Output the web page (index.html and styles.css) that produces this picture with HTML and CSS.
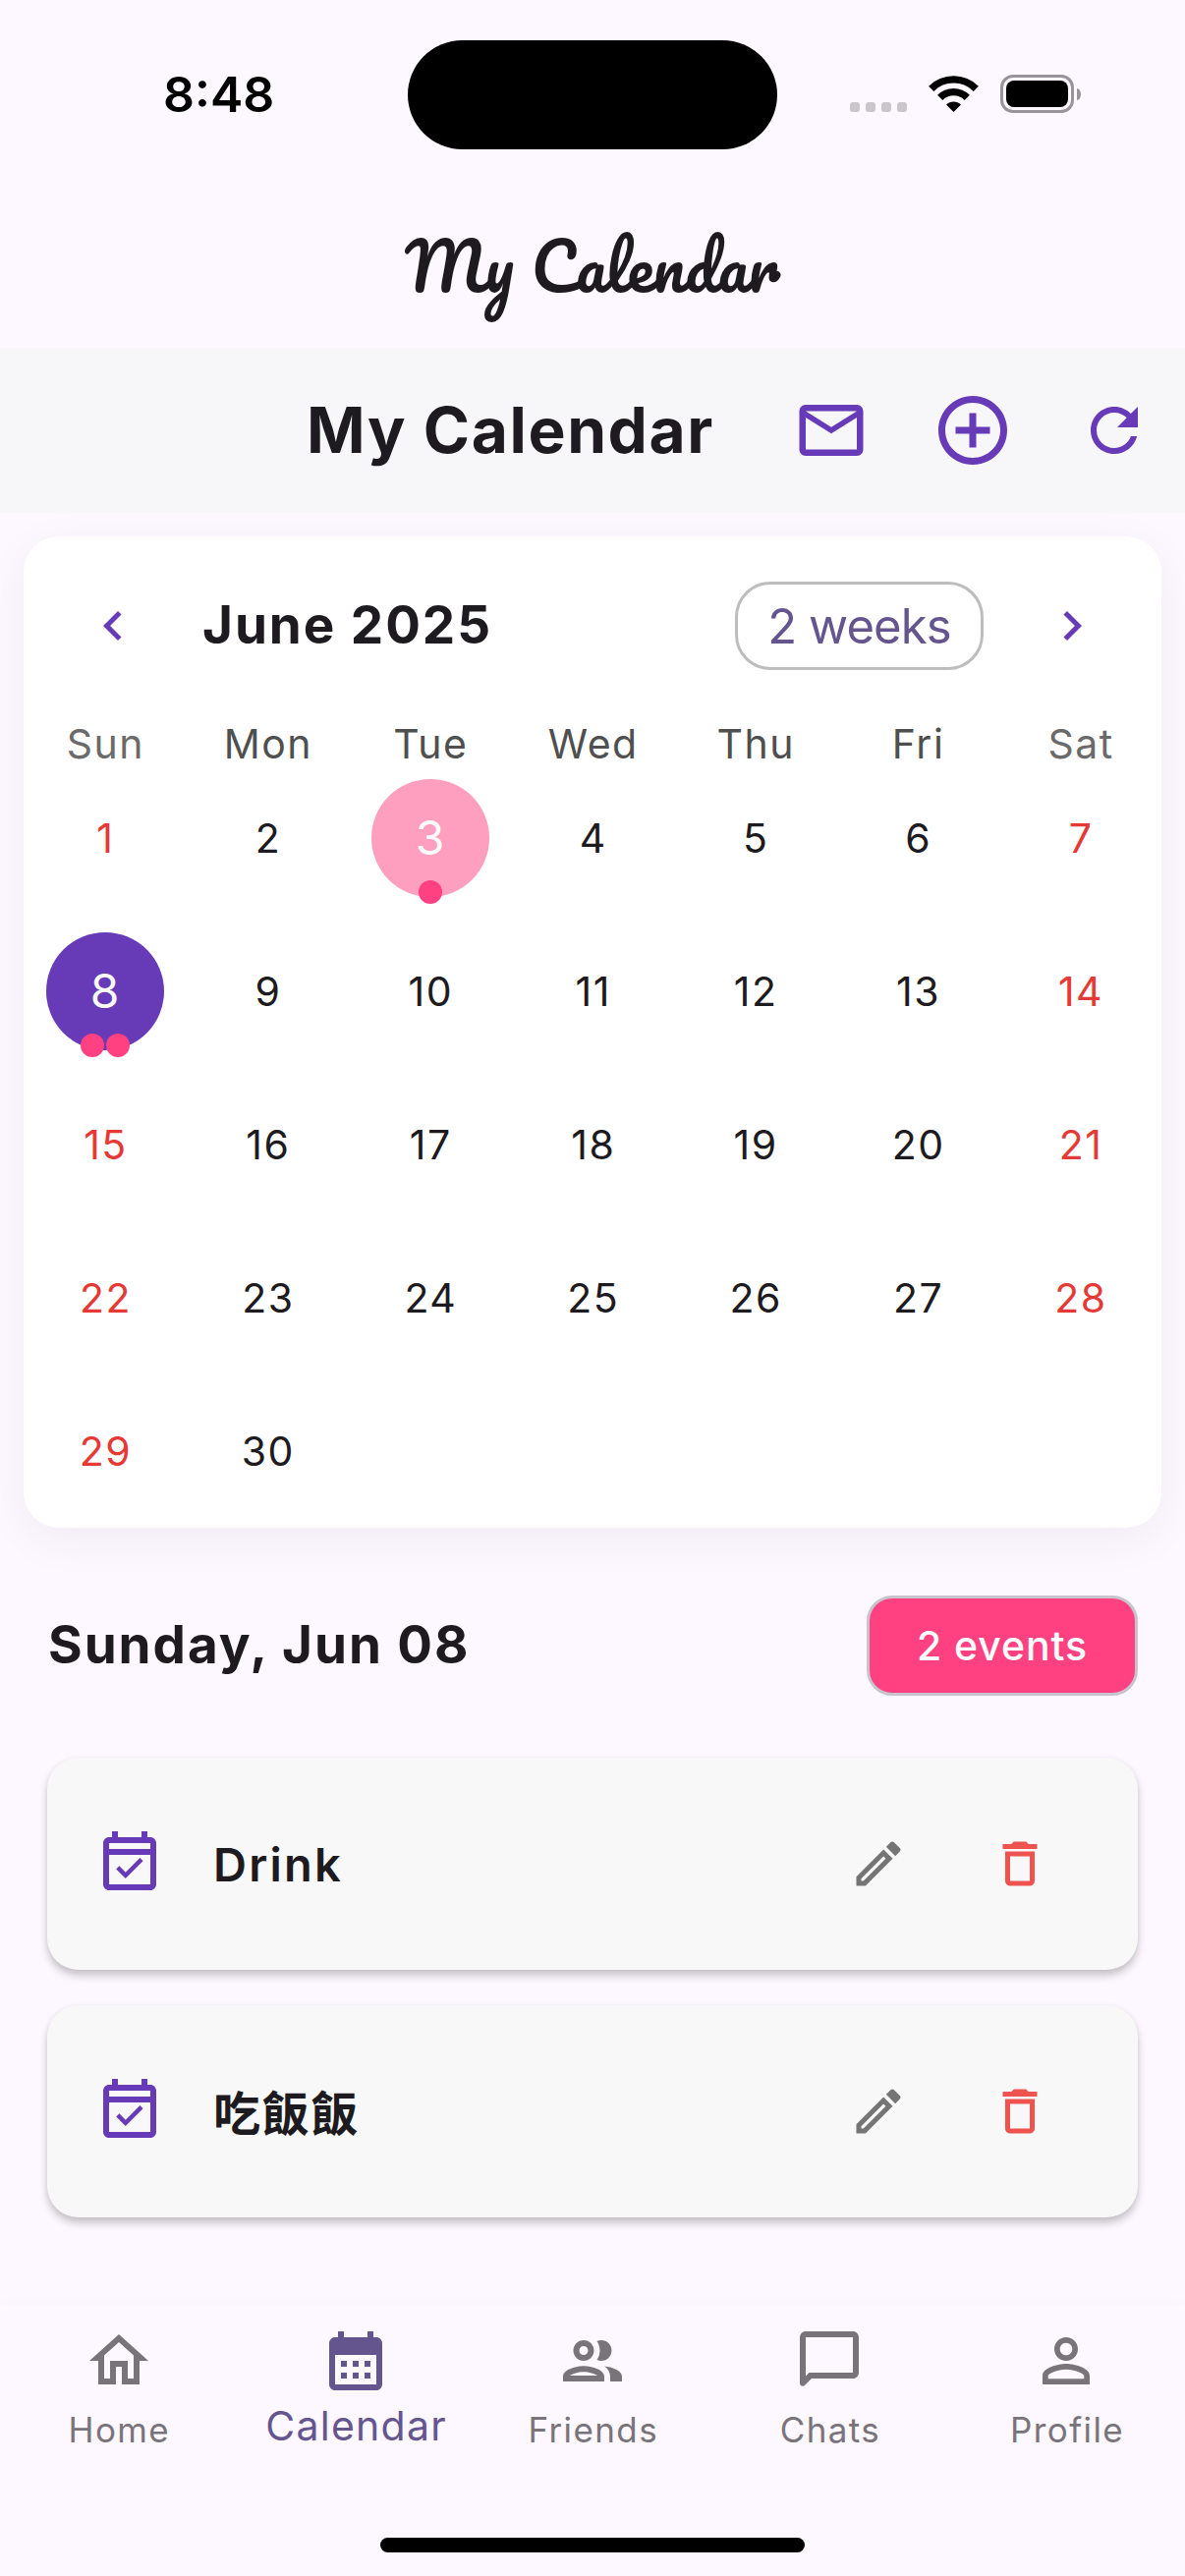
FILE: index.html
```html
<!DOCTYPE html>
<html lang="en">
<head>
<meta charset="utf-8">
<title>My Calendar</title>
<link rel="stylesheet" href="styles.css">
</head>
<body>
<div class="app">
  <header class="status">
    <div class="status-left"><span class="time">8:48</span></div>
    <div class="island"></div>
    <div class="status-right">
      <span class="signal"><i></i><i></i><i></i><i></i></span>
      <svg class="wifi" viewBox="0 0 51 37"><g fill="none" stroke="#000" stroke-width="7.4"><path d="M2.7 13.3A32.3 32.3 0 0 1 48.3 13.3"/><path d="M11.7 22.3A19.5 19.5 0 0 1 39.3 22.3"/></g><path d="M18 29.5A10.6 10.6 0 0 1 33 29.5L25.5 37z"/></svg>
      <span class="battery"><span class="battery-shell"><span class="battery-level"></span></span><span class="battery-cap"></span></span>
    </div>
  </header>

  <div class="brand"><h1>My Calendar</h1></div>

  <div class="toolbar">
    <h2>My Calendar</h2>
    <div class="tools">
      <span class="tool"><svg class="s78" viewBox="0 0 24 24"><path d="M22 6c0-1.1-.9-2-2-2H4c-1.1 0-2 .9-2 2v12c0 1.1.9 2 2 2h16c1.100 0 2-.9 2-2V6zm-2 0l-8 5-8-5h16zm0 12H4V8l8 5 8-5v10z"/></svg></span>
      <span class="tool"><svg class="s84" viewBox="0 0 24 24"><path d="M13 7h-2v4H7v2h4v4h2v-4h4v-2h-4V7zm-1-5C6.480 2 2 6.480 2 12s4.480 10 10 10 10-4.480 10-10S17.520 2 12 2zm0 18c-4.410 0-8-3.590-8-8s3.590-8 8-8 8 3.590 8 8-3.590 8-8 8z"/></svg></span>
      <span class="tool"><svg class="s72" viewBox="0 0 24 24"><path d="M17.650 6.350C16.200 4.900 14.210 4 12 4c-4.420 0-7.990 3.580-7.990 8s3.570 8 7.990 8c3.730 0 6.840-2.550 7.730-6h-2.080c-.82 2.330-3.040 4-5.650 4-3.310 0-6-2.690-6-6s2.690-6 6-6c1.660 0 3.140.69 4.220 1.780L13 11h7V4l-2.350 2.350z"/></svg></span>
    </div>
  </div>

  <section class="calendar">
    <div class="cal-head">
      <svg class="s60" viewBox="0 0 24 24"><path d="M15.410 7.410L14 6l-6 6 6 6 1.410-1.410L10.830 12z"/></svg>
      <span class="month">June 2025</span>
      <span class="format">2 weeks</span>
      <svg class="s60" viewBox="0 0 24 24"><path d="M10 6L8.590 7.410 13.170 12l-4.580 4.590L10 18l6-6z"/></svg>
    </div>
    <div class="week dow"><span class="off">Sun</span><span>Mon</span><span>Tue</span><span>Wed</span><span>Thu</span><span>Fri</span><span class="off">Sat</span></div>
    <div class="week"><span class="red">1</span><span>2</span><span><b class="pick today">3<em><i></i></em></b></span><span>4</span><span>5</span><span>6</span><span class="red">7</span></div>
    <div class="week"><span><b class="pick selected">8<em><i></i><i></i></em></b></span><span>9</span><span>10</span><span>11</span><span>12</span><span>13</span><span class="red">14</span></div>
    <div class="week"><span class="red">15</span><span>16</span><span>17</span><span>18</span><span>19</span><span>20</span><span class="red">21</span></div>
    <div class="week"><span class="red">22</span><span>23</span><span>24</span><span>25</span><span>26</span><span>27</span><span class="red">28</span></div>
    <div class="week"><span class="red">29</span><span>30</span></div>
  </section>

  <div class="day-head">
    <h3>Sunday, Jun 08</h3>
    <span class="count">2 events</span>
  </div>

  <ul class="events">
    <li>
      <svg class="s72 check" viewBox="0 0 24 24"><path d="M16.530 11.060L15.470 10l-4.880 4.880-2.120-2.120-1.060 1.060L10.590 17l5.940-5.940zM19 3h-1V1h-2v2H8V1H6v2H5c-1.110 0-1.990.9-1.990 2L3 19c0 1.100.89 2 2 2h14c1.100 0 2-.9 2-2V5c0-1.100-.9-2-2-2zm0 16H5V9h14v10zM5 7V5h14v2H5z"/></svg>
      <span class="name">Drink</span>
      <span class="act edit"><svg class="s60" viewBox="0 0 24 24"><path d="M14.060 9.020l.92.92L5.920 19H5v-.92l9.060-9.060M17.660 3c-.25 0-.51.1-.7.29l-1.830 1.830 3.750 3.750 1.830-1.830c.39-.39.39-1.020 0-1.410l-2.340-2.340c-.2-.2-.45-.29-.71-.29zm-3.600 3.190L3 17.250V21h3.750L17.810 9.940l-3.750-3.750z"/></svg></span>
      <span class="act del"><svg class="s60" viewBox="0 0 24 24"><path d="M6 19c0 1.100.9 2 2 2h8c1.100 0 2-.9 2-2V7H6v12zM8 9h8v10H8V9zm7.500-5l-1-1h-5l-1 1H5v2h14V4h-3.500z"/></svg></span>
    </li>
    <li>
      <svg class="s72 check" viewBox="0 0 24 24"><path d="M16.530 11.060L15.470 10l-4.880 4.880-2.120-2.120-1.060 1.060L10.590 17l5.940-5.940zM19 3h-1V1h-2v2H8V1H6v2H5c-1.110 0-1.990.9-1.990 2L3 19c0 1.100.89 2 2 2h14c1.100 0 2-.9 2-2V5c0-1.100-.9-2-2-2zm0 16H5V9h14v10zM5 7V5h14v2H5z"/></svg>
      <span class="name cjk" lang="zh-Hant">吃飯飯</span>
      <span class="act edit"><svg class="s60" viewBox="0 0 24 24"><path d="M14.060 9.020l.92.92L5.920 19H5v-.92l9.060-9.060M17.660 3c-.25 0-.51.1-.7.29l-1.830 1.830 3.750 3.750 1.830-1.830c.39-.39.39-1.020 0-1.410l-2.340-2.340c-.2-.2-.45-.29-.71-.29zm-3.600 3.190L3 17.250V21h3.750L17.810 9.940l-3.750-3.750z"/></svg></span>
      <span class="act del"><svg class="s60" viewBox="0 0 24 24"><path d="M6 19c0 1.100.9 2 2 2h8c1.100 0 2-.9 2-2V7H6v12zM8 9h8v10H8V9zm7.500-5l-1-1h-5l-1 1H5v2h14V4h-3.500z"/></svg></span>
    </li>
  </ul>

  <footer class="bottom">
    <nav>
      <a><svg class="s72" viewBox="0 0 24 24"><path d="M12 5.690l5 4.500V18h-2v-6H9v6H7v-7.810l5-4.500M12 3L2 12h3v8h6v-6h2v6h6v-8h3L12 3z"/></svg><span>Home</span></a>
      <a class="active"><svg class="s72" viewBox="0 0 24 24"><path d="M19 4h-1V2h-2v2H8V2H6v2H5c-1.110 0-1.990.9-1.990 2L3 20c0 1.100.89 2 2 2h14c1.100 0 2-.9 2-2V6c0-1.100-.9-2-2-2zm0 16H5V10h14v10zM9 14H7v-2h2v2zm4 0h-2v-2h2v2zm4 0h-2v-2h2v2zm-8 4H7v-2h2v2zm4 0h-2v-2h2v2zm4 0h-2v-2h2v2z"/></svg><span>Calendar</span></a>
      <a><svg class="s72" viewBox="0 0 24 24"><path d="M9 13.750c-2.340 0-7 1.170-7 3.500V19h14v-1.750c0-2.330-4.660-3.500-7-3.500zM4.340 17c.84-.58 2.870-1.250 4.660-1.250s3.820.67 4.660 1.250H4.340zM9 12c1.930 0 3.500-1.570 3.500-3.500S10.930 5 9 5 5.500 6.570 5.500 8.500 7.070 12 9 12zm0-5c.83 0 1.500.67 1.500 1.500S9.830 10 9 10s-1.500-.67-1.500-1.500S8.170 7 9 7zm7.040 6.810c1.160.84 1.960 1.960 1.960 3.440V19h4v-1.750c0-2.020-3.500-3.170-5.960-3.440zM15 12c1.930 0 3.500-1.570 3.500-3.500S16.930 5 15 5c-.54 0-1.040.13-1.500.35.63.89 1 1.980 1 3.150s-.37 2.260-1 3.150c.46.22.96.35 1.500.35z"/></svg><span>Friends</span></a>
      <a><svg class="s72" viewBox="0 0 24 24"><path fill-rule="evenodd" d="M4 2h16c1.100 0 2 .9 2 2v12c0 1.100-.9 2-2 2H6l-2.290 2.290C3.080 20.920 2 20.470 2 19.580V4c0-1.100.9-2 2-2zM4 4v13.170L5.170 16H20V4z"/></svg><span>Chats</span></a>
      <a><svg class="s72" viewBox="0 0 24 24"><path d="M12 5.900c1.160 0 2.100.94 2.100 2.100s-.94 2.100-2.100 2.100S9.900 9.160 9.900 8s.94-2.100 2.100-2.100m0 9c2.970 0 6.100 1.460 6.100 2.100v1.100H5.900V17c0-.64 3.130-2.100 6.100-2.100M12 4C9.790 4 8 5.790 8 8s1.790 4 4 4 4-1.790 4-4-1.790-4-4-4zm0 9c-2.670 0-8 1.340-8 4v3h16v-3c0-2.660-5.330-4-8-4z"/></svg><span>Profile</span></a>
    </nav>
    <div class="home-bar"></div>
  </footer>
</div>
</body>
</html>
```
FILE: styles.css
```css
* { box-sizing: border-box; margin: 0; padding: 0; }
body { background: #fdf7ff; color: #1d1b20; font-family: Inter, "Noto Sans CJK TC", sans-serif; }
.app { width: 1206px; height: 2622px; display: flex; flex-direction: column; overflow: hidden; }
svg { display: block; fill: currentColor; flex: none; }
.s60 { width: 60px; height: 60px; }
.s72 { width: 72px; height: 72px; }
.s78 { width: 78px; height: 78px; }
.s84 { width: 84px; height: 84px; }

/* status bar */
.status { height: 186px; display: flex; align-items: flex-start; color: #000; }
.status-left { width: 415px; padding-left: 166px; }
.time { display: block; margin-top: 66px; font-size: 50px; font-weight: 600; line-height: 60px; }
.island { width: 376px; height: 111px; margin-top: 41px; border-radius: 56px; background: #000; }
.status-right { display: flex; align-items: flex-start; padding-left: 74px; }
.signal { display: flex; gap: 6px; margin-top: 104px; }
.signal i { width: 10px; height: 10px; border-radius: 3px; background: #cbc6cc; }
.wifi { width: 51px; height: 37px; margin: 77px 0 0 22px; }
.battery { display: flex; align-items: center; gap: 3px; margin: 76px 0 0 22px; }
.battery-shell { width: 75px; height: 39px; padding: 3px; border: 3px solid #98949a; border-radius: 13px; }
.battery-level { display: block; height: 27px; border-radius: 8px; background: #000; }
.battery-cap { width: 4px; height: 12px; border-radius: 0 4px 4px 0 / 0 6px 6px 0; background: #98949a; }

.brand { height: 168px; display: flex; align-items: center; justify-content: center; }
.brand h1 { font: 400 66px/116px Pacifico, cursive; }

/* toolbar */
.toolbar { height: 168px; display: flex; align-items: center; justify-content: space-between; background: #f7f7f9; }
.toolbar h2 { padding-left: 312px; font-size: 64px; font-weight: 700; line-height: 78px; letter-spacing: 1.6px; white-space: nowrap; }
.tools { display: flex; color: #673ab7; }
.tool { width: 144px; display: flex; align-items: center; justify-content: center; }

/* month card */
.calendar { height: 1009px; margin: 24px 24px 0; border-radius: 36px; background: #fff; box-shadow: 0 12px 48px rgba(0, 0, 0, .05); flex: none; }
.cal-head { height: 181px; padding: 0 61px; display: flex; align-items: center; color: #673ab7; }
.month { flex: 1; padding-left: 61px; font-size: 53px; font-weight: 700; letter-spacing: 1.95px; line-height: 62px; padding-bottom: 1px; color: #1d1b20; }
.format { width: 253px; height: 90px; margin-right: 60px; border: 3px solid #bdbdbd; border-radius: 36px; font-size: 49px; letter-spacing: -.9px; line-height: 85px; text-align: center; color: #65558f; }
.week { height: 156px; display: grid; grid-template-columns: repeat(7, 1fr); align-items: center; font-size: 41px; letter-spacing: 1.5px; }
.week > span { display: flex; justify-content: center; padding-left: 1.5px; line-height: 48px; }
.week.dow { height: 48px; padding-top: 12px; font-size: 41px; color: #4f4f4f; }
.week.dow > span { line-height: 36px; }
.week.dow .off { color: #6a6a6a; }
.red { color: #e53935; }
.pick { position: relative; width: 120px; height: 120px; margin-left: -1.5px; border-radius: 50%; font-size: 48px; font-weight: 400; line-height: 119px; letter-spacing: 0; text-align: center; color: #fafafa; }
.today { background: #ff9fbf; }
.selected { background: #673ab7; }
.pick em { position: absolute; left: 0; right: 0; top: 103px; display: flex; justify-content: center; gap: 1.8px; }
.pick i { width: 24px; height: 24px; border-radius: 50%; background: #ff4081; }

/* selected day */
.day-head { height: 234px; padding: 5px 48px 0 49px; display: flex; align-items: center; justify-content: space-between; flex: none; }
.day-head h3 { font-size: 53px; font-weight: 700; line-height: 62px; padding-bottom: 2px; letter-spacing: 1.95px; }
.count { width: 276px; height: 102px; border: 3px solid #c8c3cd; border-radius: 26px; background: #ff4081; color: #fff; font-size: 41px; font-weight: 500; letter-spacing: .9px; line-height: 96px; text-align: center; }

.events { list-style: none; padding: 0 48px; display: flex; flex-direction: column; gap: 36px; flex: 1; }
.events li { height: 216px; display: flex; align-items: center; padding: 0 48px; border-radius: 32px; background: #f8f8f8; box-shadow: 0 6px 9px rgba(0, 0, 0, .2), 0 1px 6px rgba(0, 0, 0, .05); }
.check { color: #673ab7; }
.name { flex: 1; padding-left: 49px; padding-top: 2px; font-size: 47px; font-weight: 600; line-height: 60px; letter-spacing: 2.2px; }
.cjk { padding-top: 0; padding-bottom: 3px; font-family: "Noto Sans CJK TC", sans-serif; font-size: 48px; font-weight: 700; letter-spacing: 1.6px; }
.act { width: 144px; display: flex; justify-content: center; }
.edit { color: #757575; }
.del { color: #ef5350; }

/* bottom navigation */
.bottom { height: 276px; display: flex; flex-direction: column; align-items: center; box-shadow: 0 -3px 12px rgba(0, 0, 0, .02); background: #fdf7ff; flex: none; }
nav { width: 100%; height: 237px; display: grid; grid-template-columns: repeat(5, 1fr); }
nav a { padding-top: 21px; display: flex; flex-direction: column; align-items: center; color: #79747a; font-size: 35px; letter-spacing: 1.4px; }
nav a span { margin-top: 16px; padding-left: 1.5px; line-height: 36px; }
nav .active { color: #65558f; font-size: 41px; letter-spacing: 1.26px; }
nav .active span { margin-top: 12px; }
.home-bar { width: 432px; height: 15px; border-radius: 8px; background: #000; }
```
